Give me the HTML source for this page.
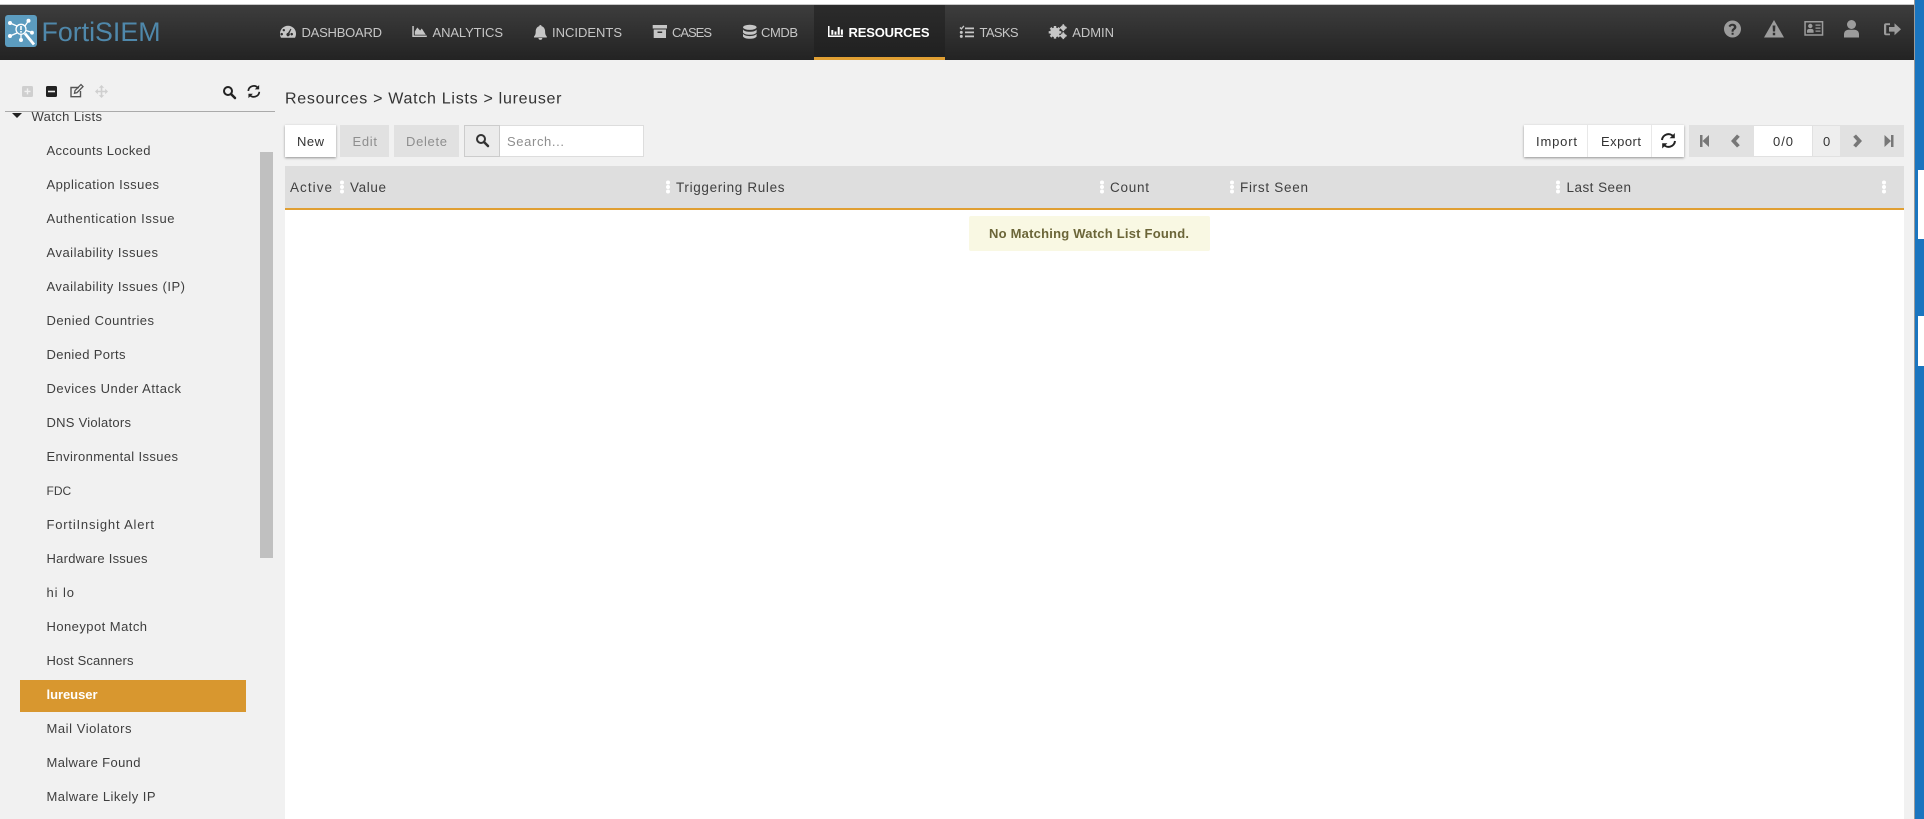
<!DOCTYPE html>
<html lang="en"><head><meta charset="utf-8"><title>FortiSIEM - Resources</title>
<style>
html,body{margin:0;padding:0;width:1924px;height:819px;overflow:hidden;background:#f1f1f1}
svg{display:block}
text{font-family:"Liberation Sans",sans-serif;dominant-baseline:auto}
.nav{font-size:13px;fill:#c6c6c6}
.side{font-size:13px;fill:#3e3e3e}
.hd{font-size:13.5px;fill:#404040}
.btn{font-size:13px;fill:#333}
.dis{font-size:13px;fill:#8e8e8e}
</style></head><body>
<svg width="1924" height="819" viewBox="0 0 1924 819" xmlns="http://www.w3.org/2000/svg">
<defs>
<linearGradient id="g" x1="0" y1="0" x2="0" y2="1"><stop offset="0" stop-color="#3d3d3d"/><stop offset="1" stop-color="#232323"/></linearGradient>
<linearGradient id="g2" x1="0" y1="0" x2="0" y2="1"><stop offset="0" stop-color="#2b2b2b"/><stop offset="1" stop-color="#202020"/></linearGradient>
<filter id="sh" x="-10%" y="-20%" width="120%" height="150%"><feDropShadow dx="0" dy="1" stdDeviation="1.2" flood-color="#000" flood-opacity=".4"/></filter>
<g id="dots" fill="#fff"><circle cx="0" cy="-4.5" r="2"/><circle cx="0" cy="0" r="2"/><circle cx="0" cy="4.5" r="2"/></g>
<g id="ref" fill="none" stroke-width="2"><path d="M1.500 7a6.500 6.500 0 0 1 11.500-3.500M14.500 8a6.500 6.500 0 0 1-11.500 3.500"/><path d="M14.300 0v5.200h-5.200z" fill="currentColor" stroke="none"/><path d="M1.700 15.500v-5.200h5.200z" fill="currentColor" stroke="none"/></g>
<g id="mag" fill="none" stroke-width="2"><circle cx="5" cy="5" r="4"/><path d="M8 8l4 4" stroke-linecap="round" stroke-width="2.500"/></g>
<g id="sg"><circle r="1.900" fill="none" stroke="#c6c6c6" stroke-width="1.400"/><path d="M-.8-3.400h1.600v6.800h-1.600zM-3.400-.8h6.800v1.600h-6.800z"/></g>
</defs>

<!-- page -->
<rect width="1924" height="819" fill="#f1f1f1"/>
<rect width="1924" height="4" fill="#fff"/>
<rect y="4" width="1915" height="1" fill="#c8c8c8"/>
<rect x="1915" width="9" height="819" fill="#1a75bf"/>
<rect x="1914" y="0" width="1" height="819" fill="#9a9a9a"/>
<rect x="1918" y="170" width="6" height="69" fill="#fff"/>
<rect x="1918" y="316" width="6" height="50" fill="#fff"/>

<!-- navbar -->
<rect y="5" width="1914" height="55" fill="url(#g)"/>
<rect x="814" y="5" width="131" height="55" fill="url(#g2)"/>
<rect x="814" y="57" width="131" height="3" fill="#e09f33"/>

<!-- logo -->
<rect x="5" y="15" width="32" height="32" rx="3" fill="#5c9cbf"/>
<g stroke="#fff" stroke-width="1.300" fill="none">
<circle cx="21" cy="29.300" r="5"/>
<path d="M17 26l-7-3M25 26l3.500-5.300M26 30.500l6 2M17 33l-7 3M21 34.300v5.700"/>
</g>
<g fill="#fff"><circle cx="10" cy="23" r="2"/><circle cx="28.500" cy="20.700" r="2"/><circle cx="32" cy="32.700" r="1.900"/><circle cx="10" cy="36" r="2"/><circle cx="21" cy="40" r="2"/><rect x="20.200" y="26" width="1.600" height="4"/><rect x="20.200" y="31" width="1.600" height="1.600"/></g>
<path d="M25 33.500l9 11" stroke="#fff" stroke-width="2.800"/>
<text x="41.500" y="41" font-size="27" fill="#4f88ab" textLength="119" lengthAdjust="spacingAndGlyphs">FortiSIEM</text>

<!-- nav items -->
<g fill="#c6c6c6">
<!-- dashboard -->
<path fill-rule="evenodd" d="M288 25.700a8 8 0 0 0-8 8c0 1.500.4 3 1 4h14c.6-1 1-2.500 1-4a8 8 0 0 0-8-8zm-5 8.500a1.300 1.300 0 1 1 0-.1zm2-4a1.200 1.200 0 1 1 0-.1zm8 4a1.300 1.300 0 1 1 0-.1zm-5.900 1.900a1.900 1.900 0 0 1 .9-3.400l2.500-4 .9.4-1.900 4.200a1.900 1.900 0 0 1-2.400 2.800z"/>
<!-- analytics -->
<path d="M412.300 26h1.500v9.500h13v1.500h-14.500z"/><path d="M414.800 34.800v-3.300l2.500-4 2.800 3 1.700-2 4 6.300z"/>
<!-- bell -->
<path d="M540.400 25c.7 0 1.200.5 1.200 1.200 2.400.6 3.500 2.900 3.500 5.300 0 3.200.9 4 1.700 5v1h-12.800v-1c.8-1 1.700-1.800 1.700-5 0-2.400 1.100-4.700 3.500-5.300 0-.7.500-1.200 1.200-1.200zM538.500 38h3.800a1.900 1.900 0 0 1-3.800 0z"/>
<!-- cases -->
<path fill-rule="evenodd" d="M652.700 25h14.300v3.500h-14.300zM653.700 29.500h12.300v8.500h-12.300zM657.500 31.500v1.500h4.700v-1.500z"/>
<!-- cmdb -->
<ellipse cx="749.800" cy="27.300" rx="6.800" ry="2.600"/><path d="M743 29.500c1 1.600 3.500 2.300 6.800 2.300s5.800-.7 6.800-2.300v3c-1 1.600-3.500 2.300-6.800 2.300s-5.800-.7-6.800-2.300zM743 33.800c1 1.600 3.500 2.300 6.800 2.300s5.800-.7 6.800-2.300v2.700c-1 1.600-3.500 2.300-6.800 2.300s-5.800-.7-6.800-2.300z"/>
<!-- tasks -->
<path d="M965 27.500h9v1.800h-9zM965 31.500h9v1.800h-9zM965 35.500h9v1.800h-9z"/><path d="M959.500 28l1-1 .9.900 2-2.400 1 .9-3 3.500z"/><circle cx="961.300" cy="32.400" r="1.500"/><circle cx="961.300" cy="36.400" r="1.500"/>
<!-- admin -->
<g transform="translate(1055 32.300)"><circle r="3.500" fill="none" stroke="#c6c6c6" stroke-width="2.600"/><path d="M-1.200-6.300h2.400v12.600h-2.400zM-6.300-1.200h12.600v2.400h-12.600zM-5.300-3.600l1.700-1.700 8.900 8.900-1.700 1.700zM3.600-5.300l1.700 1.700-8.900 8.900-1.700-1.700z"/></g>
<use href="#sg" x="1063.300" y="27.700"/><use href="#sg" x="1063.300" y="35.700"/>
</g>
<!-- resources icon -->
<g fill="#fff"><path d="M828 26h1.500v9.500h13.500v1.500h-15z"/><path d="M831.300 30h2v4.700h-2zM834.500 31.500h2v3.200h-2zM837.700 27h2v7.700h-2zM840.900 29.500h2v5.200h-2z"/></g>

<g class="nav">
<text x="301.500" y="37" textLength="80.500">DASHBOARD</text>
<text x="432.500" y="37" textLength="70.500">ANALYTICS</text>
<text x="552" y="37" textLength="70">INCIDENTS</text>
<text x="672" y="37" textLength="40">CASES</text>
<text x="761" y="37" textLength="37">CMDB</text>
<text x="979.500" y="37" textLength="39">TASKS</text>
<text x="1072.300" y="37" textLength="41.700">ADMIN</text>
</g>
<text x="848.500" y="37" font-size="13" font-weight="700" fill="#fff" textLength="81">RESOURCES</text>

<!-- right nav icons -->
<g fill="#9c9c9c">
<path fill-rule="evenodd" d="M1732.500 20.500a8.500 8.500 0 1 0 0 17 8.500 8.500 0 0 0 0-17zm-.9 11.200h2v-.6c0-1 2.800-1.500 2.800-4.100 0-2-1.800-3.300-3.900-3.300-2 0-3.300 1-4 2.300l1.700 1.200c.5-.7 1-1.400 2.100-1.400.9 0 1.600.5 1.600 1.200 0 1.300-2.300 1.600-2.300 3.900zm0 3.100h2v-2h-2z"/>
<path fill-rule="evenodd" d="M1774 20l10 17.500h-20zm-1.400 5.500l.3 6h2.200l.3-6zm.2 7.200v2.600h2.400v-2.600z"/>
<path fill-rule="evenodd" d="M1804.300 21h19v14.700h-19zm1.500 1.500v11.700h16v-11.700z"/>
<circle cx="1810.300" cy="26" r="2.200"/><path d="M1807 32.700v-1.700c0-1.200.8-2 2-2h2.600c1.200 0 2 .8 2 2v1.700zM1815.500 24.500h5v1.300h-5zM1815.500 27.500h5v1.300h-5zM1815.500 30.500h5v1.300h-5z"/>
<circle cx="1851.500" cy="24.500" r="4.500"/><path d="M1844 37.500v-3c0-3 2-4.700 4.500-4.700h6c2.500 0 4.500 1.700 4.500 4.700v3z"/>
<path d="M1890 23.300h-4a2 2 0 0 0-2 2v8a2 2 0 0 0 2 2h4v-1.800h-3.800v-8.400h3.800z"/><path d="M1894.500 23.300l6.500 6-6.500 6v-3.700h-5.500v-4.600h5.500z"/>
</g>

<!-- sidebar toolbar -->
<rect x="22" y="86" width="11" height="11" rx="1.500" fill="#cfcfcf"/><path d="M24.500 90.700h2.300v-2.300h1.400v2.300h2.300v1.400h-2.300v2.300h-1.400v-2.300h-2.300z" fill="#f1f1f1"/>
<rect x="46" y="86" width="11" height="11" rx="1.500" fill="#222"/><rect x="48" y="90.700" width="7" height="1.600" fill="#f1f1f1"/>
<path d="M79 87.500h-8v9.200h9.500v-5.700" fill="none" stroke="#555" stroke-width="1.400"/><path d="M74.500 93.200l.5-2.600 6-6 2 2-6 6z" fill="none" stroke="#555" stroke-width="1.300"/>
<path d="M101.500 85l2.700 2.800h-1.900v2.900h2.900v-1.900l2.800 2.700-2.800 2.700v-1.900h-2.900v2.900h1.900l-2.700 2.800-2.700-2.800h1.900v-2.900h-2.900v1.900l-2.800-2.700 2.800-2.700v1.900h2.900v-2.900h-1.900z" fill="#cfcfcf"/>
<use href="#mag" x="223" y="86" stroke="#222"/>
<use href="#ref" transform="translate(247 85) scale(.85)" stroke="#222" color="#222"/>

<!-- sidebar tree -->
<text class="side" x="31.500" y="121" textLength="70.500">Watch Lists</text>
<rect x="0" y="104" width="282" height="7.500" fill="#f1f1f1"/>
<rect x="5" y="111" width="270" height="1" fill="#aaa"/>
<path d="M12 113h10l-5 5z" fill="#222"/>
<rect x="260" y="152" width="13" height="406" fill="#c0c0c0"/>
<rect x="20" y="680" width="226" height="32" fill="#d8972f"/>
<g class="side">
<text x="46.500" y="155" textLength="104">Accounts Locked</text>
<text x="46.500" y="189" textLength="112.500">Application Issues</text>
<text x="46.500" y="223" textLength="128">Authentication Issue</text>
<text x="46.500" y="257" textLength="111.500">Availability Issues</text>
<text x="46.500" y="291" textLength="138.500">Availability Issues (IP)</text>
<text x="46.500" y="325" textLength="107.500">Denied Countries</text>
<text x="46.500" y="359" textLength="79">Denied Ports</text>
<text x="46.500" y="393" textLength="134.500">Devices Under Attack</text>
<text x="46.500" y="427" textLength="84.500">DNS Violators</text>
<text x="46.500" y="461" textLength="131.500">Environmental Issues</text>
<text x="46.500" y="495" font-size="12">FDC</text>
<text x="46.500" y="529" textLength="107.500">FortiInsight Alert</text>
<text x="46.500" y="563" textLength="101">Hardware Issues</text>
<text x="46.500" y="597" textLength="27.500">hi lo</text>
<text x="46.500" y="631" textLength="100.500">Honeypot Match</text>
<text x="46.500" y="665" textLength="87">Host Scanners</text>
<text x="46.500" y="699" textLength="51" style="fill:#fff;font-weight:700">lureuser</text>
<text x="46.500" y="733" textLength="85">Mail Violators</text>
<text x="46.500" y="767" textLength="94">Malware Found</text>
<text x="46.500" y="801" textLength="109">Malware Likely IP</text>
</g>

<!-- breadcrumb -->
<text x="285" y="103.500" font-size="16" fill="#333" textLength="276.500">Resources &gt; Watch Lists &gt; lureuser</text>

<!-- toolbar left -->
<rect x="285" y="125" width="51" height="32" fill="#fff" filter="url(#sh)"/>
<text class="btn" x="297" y="146" textLength="27">New</text>
<rect x="340" y="125" width="49" height="32" fill="#e1e1e1"/>
<text class="dis" x="352.500" y="146" textLength="24.500">Edit</text>
<rect x="394" y="125" width="65" height="32" fill="#e1e1e1"/>
<text class="dis" x="406" y="146" textLength="41">Delete</text>
<rect x="464.500" y="125.500" width="179" height="31" fill="#fff" stroke="#ddd"/>
<rect x="464.500" y="125.500" width="35" height="31" fill="#ebebeb" stroke="#ccc"/>
<use href="#mag" x="476" y="134" stroke="#333"/>
<text class="dis" x="507" y="146" textLength="57">Search...</text>

<!-- toolbar right -->
<rect x="1524" y="125" width="160" height="32" fill="#fff" filter="url(#sh)"/>
<rect x="1587" y="125" width="1" height="32" fill="#e8e8e8"/><rect x="1651" y="125" width="1" height="32" fill="#e8e8e8"/>
<text class="btn" x="1536" y="146" textLength="41">Import</text>
<text class="btn" x="1601" y="146" textLength="40">Export</text>
<use href="#ref" x="1660.500" y="133" stroke="#222" color="#222"/>
<rect x="1689" y="125" width="215" height="32" fill="#e1e1e1"/>
<rect x="1754" y="126" width="58" height="30" fill="#fff"/>
<rect x="1813" y="126" width="27" height="30" fill="#eee"/>
<text class="btn" x="1773" y="146" textLength="20">0/0</text>
<text class="btn" x="1823" y="146" textLength="6.500">0</text>
<g fill="#777"><path d="M1700 135h2.500v12h-2.500zM1702.500 141l6.500-6v12z"/><path d="M1737 134.500l2.800 2.300-3.800 4.200 3.800 4.200-2.800 2.300-6-6.500z"/><path d="M1856 134.500l-2.800 2.300 3.800 4.200-3.800 4.200 2.800 2.300 6-6.500z"/><path d="M1891 135h2.500v12h-2.500zM1891 141l-6.500-6v12z"/></g>

<!-- table -->
<rect x="285" y="210" width="1619" height="609" fill="#fff"/>
<rect x="285" y="166" width="1619" height="42" fill="#dedede"/>
<rect x="285" y="208" width="1619" height="2" fill="#e09f33"/>
<g class="hd">
<text x="290" y="192" textLength="42">Active</text>
<text x="350" y="192" textLength="36">Value</text>
<text x="676" y="192" textLength="108.500">Triggering Rules</text>
<text x="1110" y="192" textLength="39">Count</text>
<text x="1240" y="192" textLength="68">First Seen</text>
<text x="1566.500" y="192" textLength="64.500">Last Seen</text>
</g>
<use href="#dots" x="342" y="187"/><use href="#dots" x="668" y="187"/><use href="#dots" x="1102" y="187"/><use href="#dots" x="1232" y="187"/><use href="#dots" x="1558" y="187"/><use href="#dots" x="1884" y="187"/>

<!-- message -->
<rect x="969" y="216" width="241" height="35" rx="2" fill="#f9f8e3"/>
<text x="989" y="238" font-size="13" font-weight="700" fill="#6b6538" textLength="200">No Matching Watch List Found.</text>
</svg>
</body></html>
